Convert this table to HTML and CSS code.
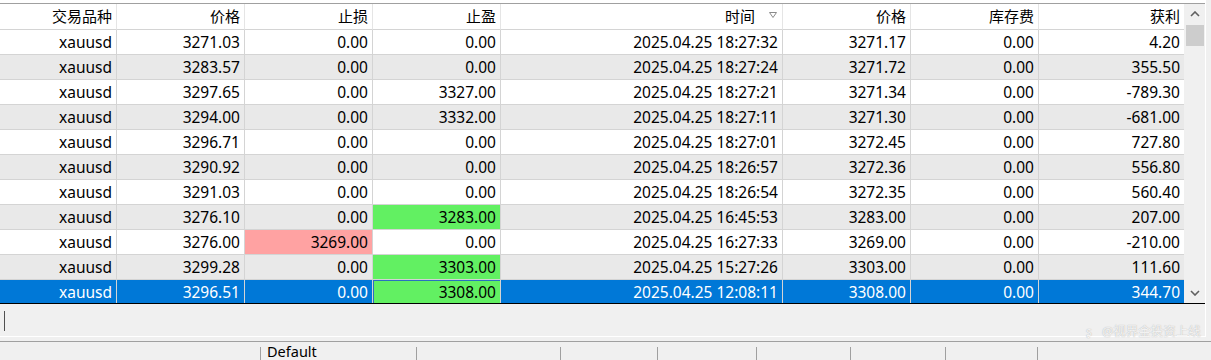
FILE: index.html
```html
<!DOCTYPE html>
<html>
<head>
<meta charset="utf-8">
<link rel="stylesheet" href="styles.css">
</head>
<body>
<div class="frame">
  <div class="gridwrap">
    <div class="table">
      <div class="row head">
        <div class="c">交易品种</div>
        <div class="c">价格</div>
        <div class="c">止损</div>
        <div class="c">止盈</div>
        <div class="c time-h">时间<svg class="sort" width="8" height="6" viewBox="0 0 8 6"><path d="M0.5 0.5 H7.5 L4 5.5 Z" fill="none" stroke="#8a8a8a" stroke-width="1"/></svg></div>
        <div class="c">价格</div>
        <div class="c">库存费</div>
        <div class="c last">获利</div>
      </div>
      <div class="row"><div class="c">xauusd</div><div class="c">3271.03</div><div class="c">0.00</div><div class="c">0.00</div><div class="c">2025.04.25 18:27:32</div><div class="c">3271.17</div><div class="c">0.00</div><div class="c last">4.20</div></div>
      <div class="row alt"><div class="c">xauusd</div><div class="c">3283.57</div><div class="c">0.00</div><div class="c">0.00</div><div class="c">2025.04.25 18:27:24</div><div class="c">3271.72</div><div class="c">0.00</div><div class="c last">355.50</div></div>
      <div class="row"><div class="c">xauusd</div><div class="c">3297.65</div><div class="c">0.00</div><div class="c">3327.00</div><div class="c">2025.04.25 18:27:21</div><div class="c">3271.34</div><div class="c">0.00</div><div class="c last">-789.30</div></div>
      <div class="row alt"><div class="c">xauusd</div><div class="c">3294.00</div><div class="c">0.00</div><div class="c">3332.00</div><div class="c">2025.04.25 18:27:11</div><div class="c">3271.30</div><div class="c">0.00</div><div class="c last">-681.00</div></div>
      <div class="row"><div class="c">xauusd</div><div class="c">3296.71</div><div class="c">0.00</div><div class="c">0.00</div><div class="c">2025.04.25 18:27:01</div><div class="c">3272.45</div><div class="c">0.00</div><div class="c last">727.80</div></div>
      <div class="row alt"><div class="c">xauusd</div><div class="c">3290.92</div><div class="c">0.00</div><div class="c">0.00</div><div class="c">2025.04.25 18:26:57</div><div class="c">3272.36</div><div class="c">0.00</div><div class="c last">556.80</div></div>
      <div class="row"><div class="c">xauusd</div><div class="c">3291.03</div><div class="c">0.00</div><div class="c">0.00</div><div class="c">2025.04.25 18:26:54</div><div class="c">3272.35</div><div class="c">0.00</div><div class="c last">560.40</div></div>
      <div class="row alt"><div class="c">xauusd</div><div class="c">3276.10</div><div class="c">0.00</div><div class="c tp">3283.00</div><div class="c">2025.04.25 16:45:53</div><div class="c">3283.00</div><div class="c">0.00</div><div class="c last">207.00</div></div>
      <div class="row"><div class="c">xauusd</div><div class="c">3276.00</div><div class="c sl">3269.00</div><div class="c">0.00</div><div class="c">2025.04.25 16:27:33</div><div class="c">3269.00</div><div class="c">0.00</div><div class="c last">-210.00</div></div>
      <div class="row alt"><div class="c">xauusd</div><div class="c">3299.28</div><div class="c">0.00</div><div class="c tp">3303.00</div><div class="c">2025.04.25 15:27:26</div><div class="c">3303.00</div><div class="c">0.00</div><div class="c last">111.60</div></div>
      <div class="row sel"><div class="c">xauusd</div><div class="c">3296.51</div><div class="c">0.00</div><div class="c tp focus">3308.00</div><div class="c">2025.04.25 12:08:11</div><div class="c">3308.00</div><div class="c">0.00</div><div class="c last">344.70</div></div>
    </div>
    <div class="vscroll">
      <div class="sbtn"><svg width="10" height="6" viewBox="0 0 10 6"><path d="M1 5 L5 1 L9 5" fill="none" stroke="#606060" stroke-width="1.6"/></svg></div>
      <div class="thumb"></div>
      <div class="track"></div>
      <div class="sbtn"><svg width="10" height="6" viewBox="0 0 10 6"><path d="M1 1 L5 5 L9 1" fill="none" stroke="#606060" stroke-width="1.6"/></svg></div>
    </div>
  </div>
  <div class="below">
    <div class="caret"></div>
  </div>
</div>
<div class="status">
  <div class="sp s1"></div>
  <div class="sp s2">Default</div>
  <div class="sp s3"></div>
  <div class="sp s4"></div>
  <div class="sp s5"></div>
  <div class="sp s6"></div>
  <div class="sp s7"></div>
  <div class="sp s8"></div>
  <div class="sp s9"></div>
</div>
<div class="watermark"><span class="wm-icon">ʂ</span>@视界金投资上线</div>
</body>
</html>
```
FILE: styles.css
```css
html, body {
  margin: 0;
  padding: 0;
}
body {
  width: 1211px;
  height: 360px;
  overflow: hidden;
  background: #f0f0f0;
  font-family: "Noto Sans", "Noto Sans CJK SC", sans-serif;
  font-size: 15.5px;
  color: #000;
  position: relative;
}
.frame {
  width: 1206px;
  height: 337px;
  padding-top: 3px;
  border-right: 1px solid #ffffff;
  border-bottom: 1px solid #ffffff;
  box-sizing: border-box;
  display: flex;
  flex-direction: column;
  background: linear-gradient(#fff 0 3px, #f0f0f0 3px);
}
.gridwrap {
  display: flex;
  width: 1205px;
  height: 301px;
  border-top: 1px solid #a0a0a0;
  border-bottom: 1px solid #000;
  box-sizing: border-box;
}
.table {
  width: 1184px;
  overflow: hidden;
  background: #fff;
}
.row {
  display: grid;
  grid-template-columns: 117px 128px 128px 128px 282px 128px 128px 145px;
  height: 25px;
  background: #fff;
}
.row.alt { background: #e9e9e9; }
.row.sel { background: #0078d7; color: #fff; }
.c {
  border-right: 1px solid #d4d4d4;
  border-bottom: 1px solid #d4d4d4;
  text-align: right;
  padding-right: 4px;
  line-height: 24px;
  white-space: nowrap;
  overflow: hidden;
}
.c.last { border-right: none; }
.row.head { height: 26px; background: #fff; }
.row.head .c {
  border-right-color: #e5e5e5;
  border-bottom-color: #d4d4d4;
  line-height: 25px;
  font-size: 15px;
}
.time-h {
  display: flex;
  justify-content: flex-end;
  align-items: center;
}
.time-h .sort {
  margin-left: 14px;
  margin-right: 1px;
  margin-top: -4px;
}
.c.tp { background: #62f062; color: #000; }
.c.sl { background: #ffa2a2; color: #000; }
.c.focus { box-shadow: inset 1px 1px 0 #2a70c0; }
.vscroll {
  width: 21px;
  background: #f0f0f0;
  display: flex;
  flex-direction: column;
}
.sbtn {
  height: 20px;
  display: flex;
  align-items: center;
  justify-content: center;
}
.thumb {
  height: 21px;
  margin: 1px 1px 0 2px;
  background: #cdcdcd;
}
.track { flex: 1; }
.below {
  flex: 1;
}
.caret {
  width: 1px;
  height: 20px;
  margin: 7px 0 0 4px;
  background: #505050;
}
.status {
  margin-top: 4px;
  border-top: 1px solid #a0a0a0;
  height: 18px;
  display: grid;
  grid-template-columns: 261px 156px 144px 97px 99px 94px 95px 92px 173px;
  font-size: 14.5px;
}
.sp {
  position: relative;
  line-height: 19px;
  padding-left: 6px;
  white-space: nowrap;
}
.sp::after {
  content: "";
  position: absolute;
  right: 0;
  top: 5px;
  bottom: 0;
  width: 1px;
  background: #a0a0a0;
}
.sp.s9::after { display: none; }
.watermark {
  position: absolute;
  left: 1086px;
  top: 321px;
  font-size: 12.5px;
  color: rgba(255,255,255,0.85);
  text-shadow: 0 0 1px rgba(110,110,110,0.6);
  white-space: nowrap;
}
.wm-icon {
  display: inline-block;
  width: 12px;
  margin-right: 4px;
}
```
